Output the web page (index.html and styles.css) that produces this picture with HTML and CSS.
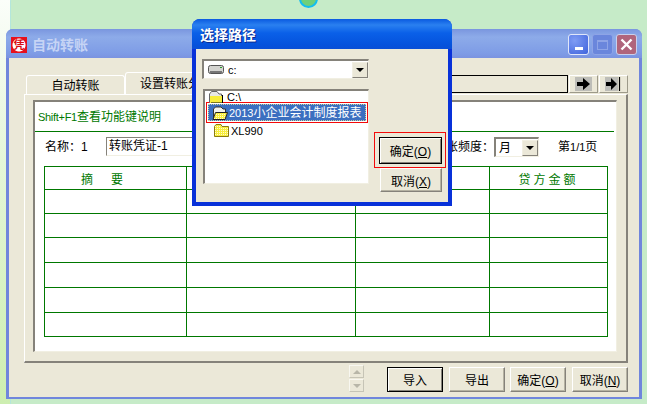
FILE: index.html
```html
<!doctype html>
<html lang="zh">
	<head>
		<meta charset="UTF-8" />
		<title>自动转账</title>
		<link rel="stylesheet" href="styles.css">
	</head>
	<body>
		<div class="wallpaper-panel"></div>
		<div class="wallpaper-dot"></div>

		<div class="window main-window">
			<div class="titlebar inactive">
				<span class="app-icon"><b>凭</b></span>
				<span class="title-text">自动转账</span>
				<div class="caption-buttons">
					<span class="cap cap-min"><i></i></span>
					<span class="cap cap-max"><i></i></span>
					<span class="cap cap-close">
						<svg width="13" height="13" viewBox="0 0 13 13">
							<path d="M1.5 1.5L11.5 11.5M11.5 1.5L1.5 11.5" stroke="#fff" stroke-width="2.4" />
						</svg>
					</span>
				</div>
			</div>
			<div class="client">
				<div class="tab-row">
					<div class="tab">自动转账</div>
					<div class="tab tab-active">设置转账分录</div>
					<div class="tab-rest"></div>
					<button class="nav-btn">
						<svg width="17" height="14" viewBox="0 0 17 14">
							<rect width="17" height="14" fill="#bdbdb8" />
							<path d="M2 5H8V1L15 7L8 13V9H2Z" fill="#000" />
						</svg>
					</button>
					<button class="nav-btn">
						<svg width="17" height="14" viewBox="0 0 17 14">
							<rect width="13" height="14" fill="#bdbdb8" />
							<path d="M1 5H6V1L12 7L6 13V9H1Z" fill="#000" />
							<path d="M14.5 0V14" stroke="#000" stroke-width="1.2" />
						</svg>
					</button>
				</div>
				<div class="tab-panel">
					<div class="sheet">
						<div class="hint"><span class="latin">Shift+F1</span>查看功能键说明</div>
						<div class="form-row">
							<span class="name-label">名称：1</span>
							<span class="name-input">转账凭证-1</span>
							<span class="freq-label">转账频度：</span>
							<span class="freq-select">月<span class="drop-btn"><i></i></span></span>
							<span class="page-no">第<span class="latin">1/1</span>页</span>
						</div>
						<div class="grid">
							<div class="cell head head-left">摘&emsp;&ensp;要</div>
							<div class="cell head"></div>
							<div class="cell head"></div>
							<div class="cell head">贷方金额</div>
							<div class="cell"></div><div class="cell"></div><div class="cell"></div><div class="cell"></div>
							<div class="cell"></div><div class="cell"></div><div class="cell"></div><div class="cell"></div>
							<div class="cell"></div><div class="cell"></div><div class="cell"></div><div class="cell"></div>
							<div class="cell"></div><div class="cell"></div><div class="cell"></div><div class="cell"></div>
							<div class="cell"></div><div class="cell"></div><div class="cell"></div><div class="cell"></div>
							<div class="cell"></div><div class="cell"></div><div class="cell"></div><div class="cell"></div>
						</div>
					</div>
				</div>
				<div class="footer">
					<div class="spinner">
						<span class="spin-btn"><i class="up"></i></span>
						<span class="spin-btn"><i class="down"></i></span>
					</div>
					<button class="btn btn-default">导入</button>
					<button class="btn">导出</button>
					<button class="btn btn-ok">确定(<u>O</u>)</button>
					<button class="btn">取消(<u>N</u>)</button>
				</div>
			</div>
		</div>

		<div class="window dialog">
			<div class="titlebar">
				<span class="dialog-title">选择路径</span>
			</div>
			<div class="dialog-client">
				<div class="dialog-left">
					<div class="drive-select">
						<svg width="16" height="10" viewBox="0 0 16 10">
							<rect x="0.5" y="0.5" width="15" height="8" rx="2" fill="#d4d4d0" stroke="#555" />
							<rect x="2" y="6" width="12" height="2" fill="#777" />
							<rect x="12" y="2" width="2" height="1" fill="#2ca02c" />
						</svg>
						<span class="drive-text">c:</span>
						<span class="drop-btn"><i></i></span>
					</div>
					<div class="dir-list">
						<div class="dir-row root">
							<svg class="folder" width="15" height="12" viewBox="0 0 15 12">
								<defs>
									<pattern id="dither" width="2" height="2" patternUnits="userSpaceOnUse">
										<rect width="2" height="2" fill="#f8ee3c" />
										<rect width="1" height="1" fill="#fffbd0" />
									</pattern>
								</defs>
								<path d="M1.5 11.5V3L3.5 0.5H9L11 3H13.5V11.5Z" fill="#e8e8e4" stroke="#666" />
								<rect x="2" y="5" width="12" height="7" fill="#f8ee3c" />
								<path d="M14.5 4V12H3" stroke="#000" fill="none" />
							</svg>
							<span class="latin">C:\</span>
						</div>
						<div class="red-box">
							<div class="dir-row selected">
								<svg class="folder" width="16" height="14" viewBox="0 0 16 14">
									<path d="M1.5 12V3L3.5 1H9L11 3H13.5V6" fill="#f2f2ee" stroke="#333" />
									<path d="M3.5 6.5H15.5L13 13.5H1Z" fill="url(#dither)" stroke="#222" />
								</svg>
								<span><span class="latin">2013</span>小企业会计制度报表</span>
							</div>
						</div>
						<div class="dir-row leaf">
							<svg class="folder" width="16" height="13" viewBox="0 0 16 13">
								<path d="M1.5 12.5V2.5L3 0.5H8L9 2.5H15.5V12.5Z" fill="url(#dither)" stroke="#8a7a10" />
							</svg>
							<span class="latin">XL990</span>
						</div>
					</div>
				</div>
				<div class="dialog-right">
					<div class="red-mark"><button class="btn btn-default dialog-ok">确定(<u>O</u>)</button></div>
					<button class="btn dialog-cancel">取消(<u>X</u>)</button>
				</div>
			</div>
		</div>
	</body>
</html>
```

FILE: styles.css
```css
* {
	box-sizing: border-box;
}
html,
body {
	margin: 0;
	height: 100%;
}
body {
	position: relative;
	width: 647px;
	height: 404px;
	overflow: hidden;
	font-family: "Liberation Sans", "Noto Sans CJK SC", sans-serif;
	font-size: 12px;
	color: #000;
	background: linear-gradient(180deg, #fbfefa 0, #e4f6d8 40%, #cdeeb0 100%);
}
.latin {
	font-size: 11px;
}
.wallpaper-panel {
	position: absolute;
	left: 11px;
	top: -10px;
	width: 640px;
	height: 420px;
	background: #c6ebc8;
	border-radius: 12px 0 0 0;
	box-shadow: -1px 0 0 #b4e6dc;
}
.wallpaper-dot {
	position: absolute;
	left: 299px;
	top: -11px;
	width: 19px;
	height: 19px;
	border-radius: 50%;
	background: #6fcf7a;
	border: 2px solid #12bdf0;
}
.window {
	position: absolute;
	display: flex;
	flex-direction: column;
}
.main-window {
	left: 6px;
	top: 29px;
	width: 636px;
	height: 370px;
	border-radius: 7px 7px 0 0;
	background: #7086dc;
}
.titlebar {
	display: flex;
	align-items: center;
	color: #fff;
	flex: none;
}
.titlebar.inactive {
	height: 29px;
	padding: 2px 5px 0 5px;
	border-radius: 7px 7px 0 0;
	background: linear-gradient(180deg, #7a96df 0, #8dabe9 8px, #7e9ce6 24px, #7b93e0 100%);
}
.app-icon {
	display: flex;
	align-items: center;
	justify-content: center;
	width: 16px;
	height: 16px;
	margin-right: 5px;
	background: radial-gradient(circle, #fff 0, #fff 6px, #e8101c 7px);
	color: #d80c14;
	font-size: 11px;
	line-height: 12px;
}
.title-text {
	flex: 1;
	margin-bottom: 2px;
	font-size: 14px;
	font-weight: bold;
	color: #c6d4f5;
}
.caption-buttons {
	display: flex;
	gap: 3px;
}
.cap {
	display: flex;
	width: 21px;
	height: 21px;
	align-items: center;
	justify-content: center;
	border: 1px solid #b4c4ee;
	border-radius: 3px;
}
.cap-min {
	background: radial-gradient(circle at 30% 30%, #7f9cf4, #3f63dc);
	border-color: #e0e6fa;
}
.cap-min i {
	width: 8px;
	height: 3px;
	margin-top: 8px;
	background: #fff;
}
.cap-max {
	background: #6a86dc;
	border-color: #8ea4e6;
}
.cap-max i {
	width: 11px;
	height: 10px;
	border: 1px solid #8ea4e6;
	border-top-width: 2px;
}
.cap-close {
	background: #b0657c;
	border-color: #c8d0ec;
}
.client {
	flex: 1;
	display: flex;
	flex-direction: column;
	margin: 0 3px 2px;
	padding: 14px 11px 0 15px;
	background: #ebe8d8;
}
.tab-row {
	display: flex;
	align-items: flex-start;
	height: 22px;
}
.tab {
	display: flex;
	align-items: center;
	justify-content: center;
	flex: none;
	width: 99px;
	height: 19px;
	margin: 3px 0 0 2px;
	padding-bottom: 2px;
	background: #ebe8d8;
	border: 1px solid #fff;
	border-bottom: 0;
	border-radius: 3px 3px 0 0;
}
.tab-active {
	justify-content: flex-start;
	width: 110px;
	height: 23px;
	margin: 0;
	padding: 0 0 4px 14px;
}
.tab-rest {
	flex: 1;
	height: 18px;
	margin-top: 3px;
	border: 1px solid #000;
}
.nav-btn {
	display: flex;
	align-items: center;
	justify-content: center;
	flex: none;
	width: 29px;
	height: 18px;
	padding: 0;
	margin: 3px 0 0 1px;
	background: #ebe8d8;
	border: 1px solid;
	border-color: #fff #9d9a8a #9d9a8a #fff;
}
.tab-panel {
	height: 269px;
	padding: 5px 9px 0 8px;
	border: 1px solid;
	border-width: 1px 2px 2px 1px;
	border-color: #fff #85827a #85827a #fff;
}
.sheet {
	height: 252px;
	padding: 0 9px;
	background: #fff;
	border: 1px solid;
	border-width: 2px 1px 1px 2px;
	border-color: #85827a #f1efe2 #f1efe2 #85827a;
}
.hint {
	height: 30px;
	margin: 0 -7px 0 -9px;
	padding: 5px 0 0 3px;
	color: #007800;
	border-bottom: 1px solid #007800;
	line-height: 20px;
}
.hint .latin {
	letter-spacing: -0.3px;
}
.form-row {
	display: flex;
	align-items: flex-start;
	height: 34px;
	padding-top: 5px;
	line-height: 21px;
}
.name-label {
	width: 62px;
	padding-left: 1px;
	font-family: "Liberation Sans", "Noto Sans CJK TC", sans-serif;
}
.name-input {
	width: 260px;
	height: 19px;
	padding-left: 2px;
	line-height: 17px;
	border: 1px solid;
	border-width: 1px 0 1px 1px;
	border-color: #85827a #f1efe2 #f1efe2 #85827a;
}
.freq-label {
	width: 128px;
	text-align: right;
	font-family: "Liberation Sans", "Noto Sans CJK TC", sans-serif;
}
.freq-select {
	display: flex;
	align-items: center;
	justify-content: space-between;
	width: 45px;
	height: 20px;
	padding: 0 0 0 3px;
	border: 2px solid;
	border-width: 2px 1px 1px 2px;
	border-color: #85827a #f1efe2 #f1efe2 #85827a;
	line-height: 16px;
}
.page-no {
	margin-left: 19px;
}
.drop-btn {
	display: flex;
	align-items: center;
	justify-content: center;
	width: 16px;
	height: 16px;
	background: #ebe8d8;
	border: 1px solid;
	border-color: #f1efe2 #85827a #85827a #f1efe2;
}
.drop-btn i {
	width: 0;
	height: 0;
	border: 4px solid transparent;
	border-top: 4px solid #000;
	border-bottom: 0;
}
.grid {
	display: grid;
	grid-template-columns: 142px 169px 134px 118px;
	grid-template-rows: 23px 24px 24px 25px 25px 25px 24px;
	width: 564px;
	border-top: 1px solid #007800;
	border-left: 1px solid #007800;
}
.cell {
	border-right: 1px solid #007800;
	border-bottom: 1px solid #007800;
}
.head {
	display: flex;
	align-items: center;
	justify-content: center;
	color: #007800;
	letter-spacing: 3px;
}
.head-left {
	justify-content: flex-start;
	padding-left: 36px;
	letter-spacing: 0;
}
.footer {
	display: flex;
	align-items: flex-end;
	justify-content: flex-end;
	gap: 6px;
	height: 29px;
}
.spinner {
	display: flex;
	flex-direction: column;
	gap: 1px;
	margin-right: 17px;
}
.spin-btn {
	display: flex;
	align-items: center;
	justify-content: center;
	width: 15px;
	height: 13px;
	background: #ebe8d8;
	border: 1px solid;
	border-color: #f8f7f0 #c6c4b6 #c6c4b6 #f8f7f0;
}
.spin-btn i {
	width: 0;
	height: 0;
	border: 4px solid transparent;
}
.spin-btn .up {
	border-top: 0;
	border-bottom-color: #b8b6a8;
}
.spin-btn .down {
	border-bottom: 0;
	border-top-color: #b8b6a8;
}
.btn {
	width: 56px;
	height: 25px;
	padding: 0;
	font-family: inherit;
	font-size: 12px;
	color: #000;
	background: #ebe8d8;
	border: 1px solid;
	border-color: #fff #85827a #85827a #fff;
	box-shadow: inset -1px -1px 0 #b5b2a2;
}
.btn-default {
	border: 1px solid #000;
	box-shadow: inset 1px 1px 0 #fff, inset -1px -1px 0 #85827a;
}
.btn-ok {
	margin-left: -1px;
}
.dialog {
	z-index: 2;
	left: 192px;
	top: 19px;
	width: 260px;
	height: 187px;
	border-radius: 8px 8px 0 0;
	background: #0831d9;
}
.dialog .titlebar {
	height: 30px;
	padding: 0 0 0 8px;
	border-radius: 8px 8px 0 0;
	background: linear-gradient(180deg, #0a5ae0 0, #2a80f0 6px, #0a60e8 14px, #0552dc 26px, #0a4fd6 100%);
}
.dialog-title {
	font-size: 14px;
	font-weight: bold;
	text-shadow: 1px 1px 0 #0a2a90;
}
.dialog-client {
	flex: 1;
	display: flex;
	gap: 5px;
	margin: 0 4px 4px;
	padding: 10px 0 0 7px;
	background: #ebe8d8;
}
.dialog-left {
	flex: none;
	width: 166px;
}
.drive-select {
	display: flex;
	align-items: center;
	height: 20px;
	margin-left: -1px;
	padding: 0 0 0 4px;
	background: #fff;
	border: 1px solid;
	border-width: 2px 1px 1px 2px;
	border-color: #85827a #f1efe2 #f1efe2 #85827a;
}
.drive-text {
	flex: 1;
	margin-left: 4px;
	font-size: 11px;
}
.dir-list {
	height: 95px;
	margin-top: 10px;
	padding: 1px 0 0 1px;
	background: #fff;
	border: 1px solid;
	border-width: 2px 1px 1px 2px;
	border-color: #85827a #f1efe2 #f1efe2 #85827a;
	line-height: 12px;
}
.dir-row {
	display: flex;
	align-items: center;
	gap: 4px;
	white-space: nowrap;
}
.root {
	height: 10px;
	padding-left: 2px;
}
.red-box {
	height: 21px;
	padding: 1px 1px 2px;
	border: 1px solid #f20a0a;
}
.selected {
	height: 17px;
	gap: 1px;
	padding-left: 3px;
	background: #3b6fc0;
	color: #fff;
	border: 1px dotted #c8d0a0;
}
.leaf {
	height: 13px;
	margin-top: 1px;
	padding-left: 7px;
	gap: 2px;
}
.dialog-right {
	display: flex;
	flex-direction: column;
	align-items: flex-start;
	padding-top: 73px;
}
.red-mark {
	width: 72px;
	height: 36px;
	padding: 4px 3px 3px 4px;
	border: 1px solid #f20a0a;
}
.dialog-ok {
	width: 63px;
	height: 27px;
}
.dialog-cancel {
	width: 62px;
	height: 24px;
	margin-left: 6px;
}
```
